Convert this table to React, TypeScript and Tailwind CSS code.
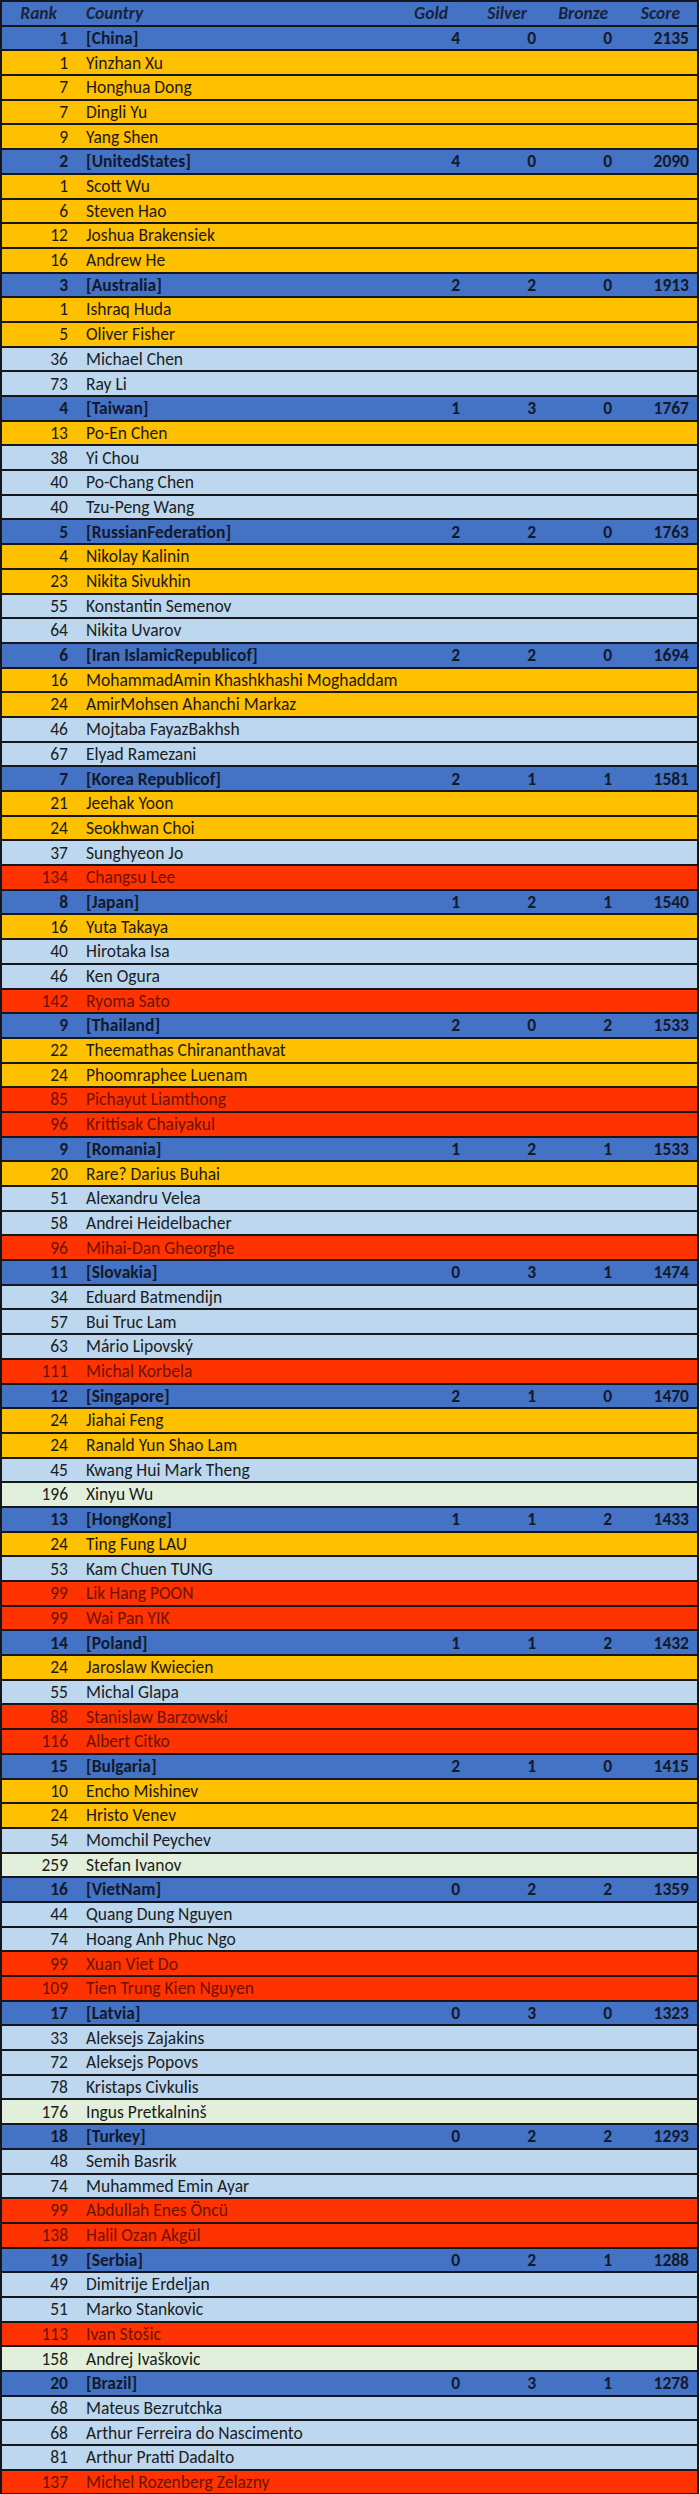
import React from 'react';

type Tone = 'o' | 'b' | 'r' | 'g';

interface Member {
  rank: number;
  name: string;
  tone: Tone;
}

interface Team {
  rank: number;
  country: string;
  gold: number;
  silver: number;
  bronze: number;
  score: number;
  members: Member[];
}

const m = (rank: number, name: string, tone: Tone): Member => ({ rank, name, tone });

const teams: Team[] = [
  { rank: 1, country: 'China', gold: 4, silver: 0, bronze: 0, score: 2135, members: [m(1, 'Yinzhan Xu', 'o'), m(7, 'Honghua Dong', 'o'), m(7, 'Dingli Yu', 'o'), m(9, 'Yang Shen', 'o')] },
  { rank: 2, country: 'UnitedStates', gold: 4, silver: 0, bronze: 0, score: 2090, members: [m(1, 'Scott Wu', 'o'), m(6, 'Steven Hao', 'o'), m(12, 'Joshua Brakensiek', 'o'), m(16, 'Andrew He', 'o')] },
  { rank: 3, country: 'Australia', gold: 2, silver: 2, bronze: 0, score: 1913, members: [m(1, 'Ishraq Huda', 'o'), m(5, 'Oliver Fisher', 'o'), m(36, 'Michael Chen', 'b'), m(73, 'Ray Li', 'b')] },
  { rank: 4, country: 'Taiwan', gold: 1, silver: 3, bronze: 0, score: 1767, members: [m(13, 'Po-En Chen', 'o'), m(38, 'Yi Chou', 'b'), m(40, 'Po-Chang Chen', 'b'), m(40, 'Tzu-Peng Wang', 'b')] },
  { rank: 5, country: 'RussianFederation', gold: 2, silver: 2, bronze: 0, score: 1763, members: [m(4, 'Nikolay Kalinin', 'o'), m(23, 'Nikita Sivukhin', 'o'), m(55, 'Konstantin Semenov', 'b'), m(64, 'Nikita Uvarov', 'b')] },
  { rank: 6, country: 'Iran IslamicRepublicof', gold: 2, silver: 2, bronze: 0, score: 1694, members: [m(16, 'MohammadAmin Khashkhashi Moghaddam', 'o'), m(24, 'AmirMohsen Ahanchi Markaz', 'o'), m(46, 'Mojtaba FayazBakhsh', 'b'), m(67, 'Elyad Ramezani', 'b')] },
  { rank: 7, country: 'Korea Republicof', gold: 2, silver: 1, bronze: 1, score: 1581, members: [m(21, 'Jeehak Yoon', 'o'), m(24, 'Seokhwan Choi', 'o'), m(37, 'Sunghyeon Jo', 'b'), m(134, 'Changsu Lee', 'r')] },
  { rank: 8, country: 'Japan', gold: 1, silver: 2, bronze: 1, score: 1540, members: [m(16, 'Yuta Takaya', 'o'), m(40, 'Hirotaka Isa', 'b'), m(46, 'Ken Ogura', 'b'), m(142, 'Ryoma Sato', 'r')] },
  { rank: 9, country: 'Thailand', gold: 2, silver: 0, bronze: 2, score: 1533, members: [m(22, 'Theemathas Chirananthavat', 'o'), m(24, 'Phoomraphee Luenam', 'o'), m(85, 'Pichayut Liamthong', 'r'), m(96, 'Krittisak Chaiyakul', 'r')] },
  { rank: 9, country: 'Romania', gold: 1, silver: 2, bronze: 1, score: 1533, members: [m(20, 'Rare? Darius Buhai', 'o'), m(51, 'Alexandru Velea', 'b'), m(58, 'Andrei Heidelbacher', 'b'), m(96, 'Mihai-Dan Gheorghe', 'r')] },
  { rank: 11, country: 'Slovakia', gold: 0, silver: 3, bronze: 1, score: 1474, members: [m(34, 'Eduard Batmendijn', 'b'), m(57, 'Bui Truc Lam', 'b'), m(63, 'Mário Lipovský', 'b'), m(111, 'Michal Korbela', 'r')] },
  { rank: 12, country: 'Singapore', gold: 2, silver: 1, bronze: 0, score: 1470, members: [m(24, 'Jiahai Feng', 'o'), m(24, 'Ranald Yun Shao Lam', 'o'), m(45, 'Kwang Hui Mark Theng', 'b'), m(196, 'Xinyu Wu', 'g')] },
  { rank: 13, country: 'HongKong', gold: 1, silver: 1, bronze: 2, score: 1433, members: [m(24, 'Ting Fung LAU', 'o'), m(53, 'Kam Chuen TUNG', 'b'), m(99, 'Lik Hang POON', 'r'), m(99, 'Wai Pan YIK', 'r')] },
  { rank: 14, country: 'Poland', gold: 1, silver: 1, bronze: 2, score: 1432, members: [m(24, 'Jaroslaw Kwiecien', 'o'), m(55, 'Michal Glapa', 'b'), m(88, 'Stanislaw Barzowski', 'r'), m(116, 'Albert Citko', 'r')] },
  { rank: 15, country: 'Bulgaria', gold: 2, silver: 1, bronze: 0, score: 1415, members: [m(10, 'Encho Mishinev', 'o'), m(24, 'Hristo Venev', 'o'), m(54, 'Momchil Peychev', 'b'), m(259, 'Stefan Ivanov', 'g')] },
  { rank: 16, country: 'VietNam', gold: 0, silver: 2, bronze: 2, score: 1359, members: [m(44, 'Quang Dung Nguyen', 'b'), m(74, 'Hoang Anh Phuc Ngo', 'b'), m(99, 'Xuan Viet Do', 'r'), m(109, 'Tien Trung Kien Nguyen', 'r')] },
  { rank: 17, country: 'Latvia', gold: 0, silver: 3, bronze: 0, score: 1323, members: [m(33, 'Aleksejs Zajakins', 'b'), m(72, 'Aleksejs Popovs', 'b'), m(78, 'Kristaps Civkulis', 'b'), m(176, 'Ingus Pretkalninš', 'g')] },
  { rank: 18, country: 'Turkey', gold: 0, silver: 2, bronze: 2, score: 1293, members: [m(48, 'Semih Basrik', 'b'), m(74, 'Muhammed Emin Ayar', 'b'), m(99, 'Abdullah Enes Öncü', 'r'), m(138, 'Halil Ozan Akgül', 'r')] },
  { rank: 19, country: 'Serbia', gold: 0, silver: 2, bronze: 1, score: 1288, members: [m(49, 'Dimitrije Erdeljan', 'b'), m(51, 'Marko Stankovic', 'b'), m(113, 'Ivan Stošic', 'r'), m(158, 'Andrej Ivaškovic', 'g')] },
  { rank: 20, country: 'Brazil', gold: 0, silver: 3, bronze: 1, score: 1278, members: [m(68, 'Mateus Bezrutchka', 'b'), m(68, 'Arthur Ferreira do Nascimento', 'b'), m(81, 'Arthur Pratti Dadalto', 'b'), m(137, 'Michel Rozenberg Zelazny', 'r')] },
];

// Excel-style fills per finishing tier
const toneClass: Record<Tone, string> = {
  o: 'bg-[#ffc000] text-[#1c1a10]',
  b: 'bg-[#bdd7ee] text-[#1a1d22]',
  r: 'bg-[#ff3300] text-[#6e1200]',
  g: 'bg-[#e2efda] text-[#1a1d1a]',
};

const rowBase =
  'grid grid-cols-[72px_320px_72px_76px_76px_79px] h-[24.7px] items-end border-b-2 border-[#15171c] pb-[2px] leading-none whitespace-nowrap';

const App: React.FC = () => {
  return (
    <div className="w-[700px] bg-white font-['Carlito','Lato',sans-serif] text-[17.5px]">
      <div className="w-[699px] border-l-2 border-r-2 border-t-2 border-[#15171c]">
        <div className={`${rowBase} h-[22.7px] bg-[#4472c4] font-bold italic text-[#18233d]`}>
          <span className="text-right pr-[17px]">Rank</span>
          <span className="pl-[12px]">Country</span>
          <span className="text-right pr-[18px]">Gold</span>
          <span className="text-right pr-[15px]">Silver</span>
          <span className="text-right pr-[10px]">Bronze</span>
          <span className="text-right pr-[17px]">Score</span>
        </div>

        {teams.map((t) => (
          <React.Fragment key={t.country}>
            <div className={`${rowBase} bg-[#4472c4] font-bold text-[#121a2c]`}>
              <span className="text-right pr-[6px]">{t.rank}</span>
              <span className="pl-[12px]">[{t.country}]</span>
              <span className="text-right pr-[6px]">{t.gold}</span>
              <span className="text-right pr-[6px]">{t.silver}</span>
              <span className="text-right pr-[6px]">{t.bronze}</span>
              <span className="text-right pr-[8px]">{t.score}</span>
            </div>
            {t.members.map((p) => (
              <div key={p.name} className={`${rowBase} ${toneClass[p.tone]}`}>
                <span className="text-right pr-[6px]">{p.rank}</span>
                <span className="pl-[12px] col-span-5">{p.name}</span>
              </div>
            ))}
          </React.Fragment>
        ))}
      </div>
    </div>
  );
};

export default App;
